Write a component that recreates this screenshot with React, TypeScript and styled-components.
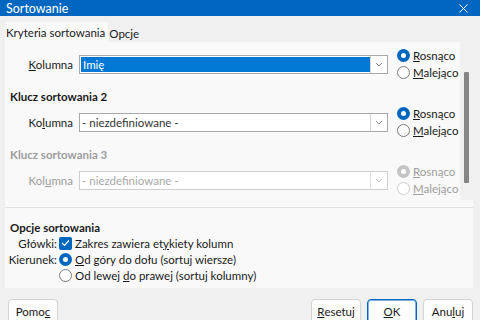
import React from "react";
import styled, { createGlobalStyle } from "styled-components";

const GlobalStyle = createGlobalStyle`
  html, body {
    margin: 0;
    padding: 0;
    background: #f0f0f0;
  }
  body {
    font-family: Lato, "Noto Sans", sans-serif;
    font-size: 11.5px;
    color: #1a1a1a;
  }
`;

const accent = "#0067c0";
const text = "11.5px";

const Window = styled.div`
  width: 480px;
  height: 320px;
  overflow: hidden;
  display: flex;
  flex-direction: column;
  background: #f0f0f0;
`;

const TitleBar = styled.div`
  height: 16px;
  flex-shrink: 0;
  background: ${accent};
  color: #fff;
  display: flex;
  align-items: center;
  justify-content: space-between;
  padding: 0 12px 0 6px;
  font-size: 12.5px;
`;

const TabBar = styled.div`
  display: flex;
  align-items: flex-end;
  height: 26px;
  padding: 0 5px;
  flex-shrink: 0;
`;

const Tab = styled.div<{ $active?: boolean }>`
  height: ${(p) => (p.$active ? "20px" : "18px")};
  display: flex;
  align-items: center;
  padding: 0 3px 0 1px;
  background: ${(p) => (p.$active ? "#f9f9f9" : "transparent")};
  font-size: ${text};
`;

const Panel = styled.div`
  margin: 0 7px 0 5px;
  background: #f9f9f9;
  display: flex;
  flex-direction: column;
  flex-shrink: 0;
`;

const ScrollArea = styled.div`
  height: 165px;
  display: flex;
  border-bottom: 1px solid #e2e2e2;
  overflow: hidden;
`;

const Rows = styled.div`
  flex: 1;
  padding-top: 4px;
`;

const Track = styled.div`
  width: 13px;
  height: 158px;
  background: #f0f0f0;
  display: flex;
  justify-content: center;
  padding-top: 30px;
  box-sizing: border-box;
`;

const Thumb = styled.div`
  width: 5px;
  height: 111px;
  background: #858585;
  border-radius: 1px;
`;

const Heading = styled.div<{ $disabled?: boolean; $flush?: boolean }>`
  height: 16px;
  margin-top: ${(p) => (p.$flush ? "0" : "6px")};
  padding-left: ${(p) => (p.$flush ? "0" : "5px")};
  display: flex;
  align-items: center;
  font-weight: 700;
  font-size: ${text};
  color: ${(p) => (p.$disabled ? "#9d9d9d" : "#1a1a1a")};
`;

const Row = styled.div<{ $disabled?: boolean }>`
  height: 36px;
  display: grid;
  grid-template-columns: 64px 309px auto;
  align-items: center;
  padding-left: 10px;
  color: ${(p) => (p.$disabled ? "#9d9d9d" : "#1a1a1a")};
`;

const Label = styled.div`
  text-align: right;
  padding-right: 6px;
  font-size: ${text};
`;

const Select = styled.div<{ $disabled?: boolean }>`
  height: 19px;
  box-sizing: border-box;
  border: 1px solid ${(p) => (p.$disabled ? "#cfcfcf" : "#a8a8a8")};
  background: #fff;
  display: flex;
  align-items: stretch;
`;

const SelectValue = styled.div<{ $selected?: boolean; $disabled?: boolean }>`
  flex: 1;
  display: flex;
  align-items: center;
  padding-left: 2px;
  font-size: ${text};
  background: ${(p) => (p.$selected ? "#0078d4" : "transparent")};
  color: ${(p) => (p.$selected ? "#fff" : p.$disabled ? "#a8a8a8" : "#333")};
  margin: ${(p) => (p.$selected ? "1px 0 1px 1px" : "0")};
`;

const DropButton = styled.div<{ $disabled?: boolean }>`
  width: 16px;
  border-left: 1px solid ${(p) => (p.$disabled ? "#e0e0e0" : "#d4d4d4")};
  display: flex;
  align-items: center;
  justify-content: center;
  color: ${(p) => (p.$disabled ? "#c4c4c4" : "#8a8a8a")};
`;

const RadioGroup = styled.div`
  display: flex;
  flex-direction: column;
  padding-left: 9px;
`;

const Option = styled.div<{ $h?: number }>`
  height: ${(p) => p.$h ?? 17}px;
  display: flex;
  align-items: center;
  gap: 3px;
  font-size: ${text};
`;

const RadioCircle = styled.span<{ $checked?: boolean; $disabled?: boolean }>`
  width: 13px;
  height: 13px;
  box-sizing: border-box;
  border-radius: 50%;
  flex-shrink: 0;
  background: ${(p) =>
    p.$checked ? (p.$disabled ? "#c4c4c4" : accent) : "#fff"};
  border: ${(p) =>
    p.$checked ? "none" : `1px solid ${p.$disabled ? "#cfcfcf" : "#7a7a7a"}`};
  display: flex;
  align-items: center;
  justify-content: center;
  &::after {
    content: "";
    display: ${(p) => (p.$checked ? "block" : "none")};
    width: 5px;
    height: 5px;
    border-radius: 50%;
    background: #fff;
  }
`;

const CheckBox = styled.span`
  width: 13px;
  height: 13px;
  border-radius: 2px;
  background: ${accent};
  display: flex;
  align-items: center;
  justify-content: center;
  flex-shrink: 0;
`;

const Options = styled.div`
  padding: 11px 0 5px 5px;
`;

const OptionsGrid = styled.div`
  display: grid;
  grid-template-columns: 47px auto;
  column-gap: 2px;
`;

const OptLabel = styled.div`
  height: 16px;
  display: flex;
  align-items: center;
  justify-content: flex-end;
  font-size: ${text};
`;

const Footer = styled.div`
  display: flex;
  align-items: flex-start;
  justify-content: space-between;
  padding: 11px 7px 0 8px;
`;

const ButtonRow = styled.div`
  display: flex;
  gap: 6px;
`;

const Button = styled.div<{ $default?: boolean }>`
  height: 25px;
  width: 50px;
  box-sizing: border-box;
  display: flex;
  align-items: center;
  justify-content: center;
  background: #fdfdfd;
  border: 1px solid ${(p) => (p.$default ? accent : "#d2d2d2")};
  box-shadow: ${(p) => (p.$default ? `inset 0 0 0 1px #7fb0e0` : "none")};
  border-radius: 4px;
  font-size: ${text};
`;

const U = styled.span`
  text-decoration: underline;
`;

const Chevron = () => (
  <svg width="8" height="5" viewBox="0 0 8 5">
    <path d="M1 1 L4 4 L7 1" fill="none" stroke="currentColor" strokeWidth="1" />
  </svg>
);

const Radio = ({
  checked,
  disabled,
  children,
}: {
  checked?: boolean;
  disabled?: boolean;
  children: React.ReactNode;
}) => (
  <Option>
    <RadioCircle $checked={checked} $disabled={disabled} />
    <span>{children}</span>
  </Option>
);

type KeyRow = {
  title?: string;
  label: React.ReactNode;
  value: string;
  selected?: boolean;
  disabled?: boolean;
};

const keys: KeyRow[] = [
  { label: <><U>K</U>olumna</>, value: "Imię", selected: true },
  {
    title: "Klucz sortowania 2",
    label: <>Ko<U>l</U>umna</>,
    value: "- niezdefiniowane -",
  },
  {
    title: "Klucz sortowania 3",
    label: <>Kol<U>u</U>mna</>,
    value: "- niezdefiniowane -",
    disabled: true,
  },
];

export default function App() {
  return (
    <>
      <GlobalStyle />
      <Window>
        <TitleBar>
          <span>Sortowanie</span>
          <svg width="9" height="9" viewBox="0 0 9 9">
            <path d="M0.5 0.5 L8.5 8.5 M8.5 0.5 L0.5 8.5" stroke="#fff" strokeWidth="1" />
          </svg>
        </TitleBar>
        <TabBar>
          <Tab $active>Kryteria sortowania</Tab>
          <Tab>Opcje</Tab>
        </TabBar>
        <Panel>
          <ScrollArea>
            <Rows>
              {keys.map((k, i) => (
                <React.Fragment key={i}>
                  {k.title && <Heading $disabled={k.disabled}>{k.title}</Heading>}
                  <Row $disabled={k.disabled}>
                    <Label>{k.label}</Label>
                    <Select $disabled={k.disabled}>
                      <SelectValue $selected={k.selected} $disabled={k.disabled}>
                        {k.value}
                      </SelectValue>
                      <DropButton $disabled={k.disabled}>
                        <Chevron />
                      </DropButton>
                    </Select>
                    <RadioGroup>
                      <Radio checked disabled={k.disabled}>
                        <U>R</U>osnąco
                      </Radio>
                      <Radio disabled={k.disabled}>
                        <U>M</U>alejąco
                      </Radio>
                    </RadioGroup>
                  </Row>
                </React.Fragment>
              ))}
            </Rows>
            <Track>
              <Thumb />
            </Track>
          </ScrollArea>
          <Options>
            <Heading $flush>Opcje sortowania</Heading>
            <OptionsGrid>
              <OptLabel>Główki:</OptLabel>
              <Option $h={16}>
                <CheckBox>
                  <svg width="9" height="8" viewBox="0 0 9 8">
                    <path d="M1 4 L3.5 6.5 L8 1.5" fill="none" stroke="#fff" strokeWidth="1.2" />
                  </svg>
                </CheckBox>
                <span>
                  Zakres zawiera et<U>y</U>kiety kolumn
                </span>
              </Option>
              <OptLabel>Kierunek:</OptLabel>
              <Option $h={16}>
                <RadioCircle $checked />
                <span>
                  <U>O</U>d góry do dołu (sortuj wiersze)
                </span>
              </Option>
              <span />
              <Option $h={16}>
                <RadioCircle />
                <span>
                  Od lewej <U>d</U>o prawej (sortuj kolumny)
                </span>
              </Option>
            </OptionsGrid>
          </Options>
        </Panel>
        <Footer>
          <Button>
            Pomo<U>c</U>
          </Button>
          <ButtonRow>
            <Button>
              <U>R</U>esetuj
            </Button>
            <Button $default>
              <U>O</U>K
            </Button>
            <Button>
              Anu<U>l</U>uj
            </Button>
          </ButtonRow>
        </Footer>
      </Window>
    </>
  );
}
